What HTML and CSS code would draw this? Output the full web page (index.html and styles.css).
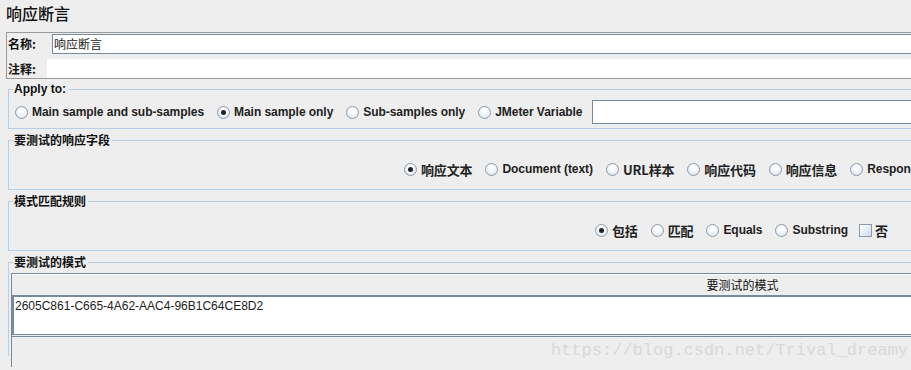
FILE: index.html
```html
<!DOCTYPE html>
<html lang="zh">
<head>
  <meta charset="UTF-8" />
  <title>响应断言</title>
  <link rel="stylesheet" href="styles.css">
</head>
<body>
  <div class="viewport">
    <div class="frame">
      <h1 class="title">响应断言</h1>

      <div class="name-panel">
        <div class="name-row">
          <span class="label">名称:</span>
          <div class="text-field">响应断言</div>
        </div>
        <div class="comment-row">
          <span class="label">注释:</span>
          <div class="comment-field"></div>
        </div>
      </div>

      <fieldset class="group apply">
        <legend>Apply to:</legend>
        <div class="options">
          <label class="opt"><span class="radio"></span>Main sample and sub-samples</label>
          <label class="opt"><span class="radio on"></span>Main sample only</label>
          <label class="opt"><span class="radio"></span>Sub-samples only</label>
          <label class="opt"><span class="radio"></span>JMeter Variable</label>
          <div class="var-field"></div>
        </div>
      </fieldset>

      <fieldset class="group field">
        <legend class="cjk">要测试的响应字段</legend>
        <div class="options shifted-1">
          <label class="opt cjk"><span class="radio on"></span>响应文本</label>
          <label class="opt"><span class="radio"></span>Document (text)</label>
          <label class="opt cjk"><span class="radio"></span>URL样本</label>
          <label class="opt cjk"><span class="radio"></span>响应代码</label>
          <label class="opt cjk"><span class="radio"></span>响应信息</label>
          <label class="opt"><span class="radio"></span>Response Headers</label>
        </div>
      </fieldset>

      <fieldset class="group rules">
        <legend class="cjk">模式匹配规则</legend>
        <div class="options shifted-2">
          <label class="opt cjk"><span class="radio on"></span>包括</label>
          <label class="opt cjk"><span class="radio"></span>匹配</label>
          <label class="opt"><span class="radio"></span>Equals</label>
          <label class="opt"><span class="radio"></span>Substring</label>
          <label class="opt cjk"><span class="check"></span>否</label>
        </div>
      </fieldset>

      <fieldset class="group patterns">
        <legend class="cjk">要测试的模式</legend>
        <div class="table">
          <div class="table-head">要测试的模式</div>
          <div class="table-row">2605C861-C665-4A62-AAC4-96B1C64CE8D2</div>
          <div class="table-rest"></div>
        </div>
      </fieldset>
    </div>

    <div class="watermark">https://blog.csdn.net/Trival_dreamy</div>
  </div>
</body>
</html>
```

FILE: styles.css
```css
html, body {
  margin: 0;
  padding: 0;
  overflow: hidden;
}
body {
  background: #eeeeee;
  color: #222;
  font-family: "Liberation Sans", Arial, "Noto Sans CJK SC", sans-serif;
  font-size: 12px;
}
.viewport {
  position: relative;
  width: 100vw;
  height: 100vh;
  overflow: hidden;
}
.frame {
  width: 1480px;
}
.cjk, .title, .label, .table-head {
  font-family: "Noto Sans CJK SC", sans-serif;
}
.title {
  margin: 0;
  padding: 2px 0 0 6px;
  font-size: 16px;
  font-weight: 500;
  line-height: 22px;
  height: 24px;
  color: #111;
}

.name-panel {
  margin: 6px 0 0 6px;
  border: 1px solid #9a9a9a;
  padding: 0 0 0 1px;
}
.name-row {
  display: flex;
  align-items: center;
  height: 21px;
}
.comment-row {
  display: flex;
  align-items: center;
  margin-top: 5px;
  height: 19px;
}
.label {
  font-weight: bold;
  font-size: 12px;
  width: 44px;
  flex: none;
  color: #111;
}
.comment-row .label {
  width: 39px;
}
.text-field {
  flex: 1;
  height: 18px;
  background: #fff;
  border: 1px solid #7a8a99;
  font-family: "Noto Sans CJK SC", sans-serif;
  font-size: 12px;
  line-height: 18px;
  padding-left: 1px;
}
.comment-field {
  flex: 1;
  height: 19px;
  background: #fff;
}

.group {
  margin: 3px 0 0 8px;
  border: 1px solid #b8cfe5;
  padding: 0;
  min-width: 0;
}
.group legend {
  margin-left: 4px;
  padding: 0 2px 0 1px;
  font-weight: bold;
  font-size: 12px;
  line-height: 14px;
  color: #111;
}
.group.field, .group.rules, .group.patterns {
  margin-top: 4px;
}
.options {
  display: flex;
  align-items: center;
  gap: 13px;
  font-weight: bold;
  white-space: nowrap;
  letter-spacing: -0.05px;
}
.apply .options {
  height: 24px;
  padding: 4px 0 4px 6px;
}
.shifted-1, .shifted-2 {
  height: 16px;
  padding: 14px 0 12px 0;
}
.shifted-1 { padding-left: 395px; }
.shifted-2 { padding-left: 586px; }
.opt {
  display: flex;
  align-items: center;
}
.opt.cjk {
  font-size: 13px;
  letter-spacing: -0.15px;
}
.radio {
  width: 11px;
  height: 11px;
  border: 1px solid #8c9aa8;
  border-radius: 50%;
  background: radial-gradient(circle at 50% 35%, #ffffff 20%, #dfe7f1 80%, #c8d4e2);
  margin-right: 4px;
  position: relative;
  flex: none;
}
.radio.on::after {
  content: "";
  position: absolute;
  left: 3px;
  top: 3px;
  width: 5px;
  height: 5px;
  border-radius: 50%;
  background: #222;
}
.check {
  width: 11px;
  height: 11px;
  border: 1px solid #8c9aa8;
  background: linear-gradient(135deg, #ffffff, #cfdbe8);
  margin-right: 3px;
  flex: none;
}
.shifted-2 .opt.cjk:last-child {
  margin-left: -2px;
}
.var-field {
  width: 900px;
  height: 22px;
  background: #fff;
  border: 1px solid #7a8a99;
  margin-left: -4px;
}

.patterns {
  height: 100px;
  border-bottom: none;
}
.table {
  margin: 4px 0 0 2px;
  border-top: 1px solid #7a8a99;
  border-left: 1px solid #7a8a99;
}
.table-head {
  height: 20px;
  line-height: 20px;
  text-align: center;
  border-top: 1px solid #fff;
  border-bottom: 2px solid #7a8a99;
  font-size: 12px;
  color: #111;
  padding-right: 6px;
}
.table-row {
  background: #fff;
  border-left: 2px solid #7a8a99;
  border-bottom: 1px solid #7a8a99;
  padding: 2px 0 0 1px;
  box-sizing: border-box;
  height: 38px;
  line-height: 14px;
  color: #222;
}
.table-rest {
  border-top: 1px solid #7a8a99;
  margin-top: 1px;
  height: 30px;
}

.watermark {
  position: absolute;
  left: 551px;
  top: 341px;
  font-family: "Liberation Mono", "DejaVu Sans Mono", monospace;
  font-size: 17px;
  color: #d9d9d9;
  white-space: nowrap;
}
```
